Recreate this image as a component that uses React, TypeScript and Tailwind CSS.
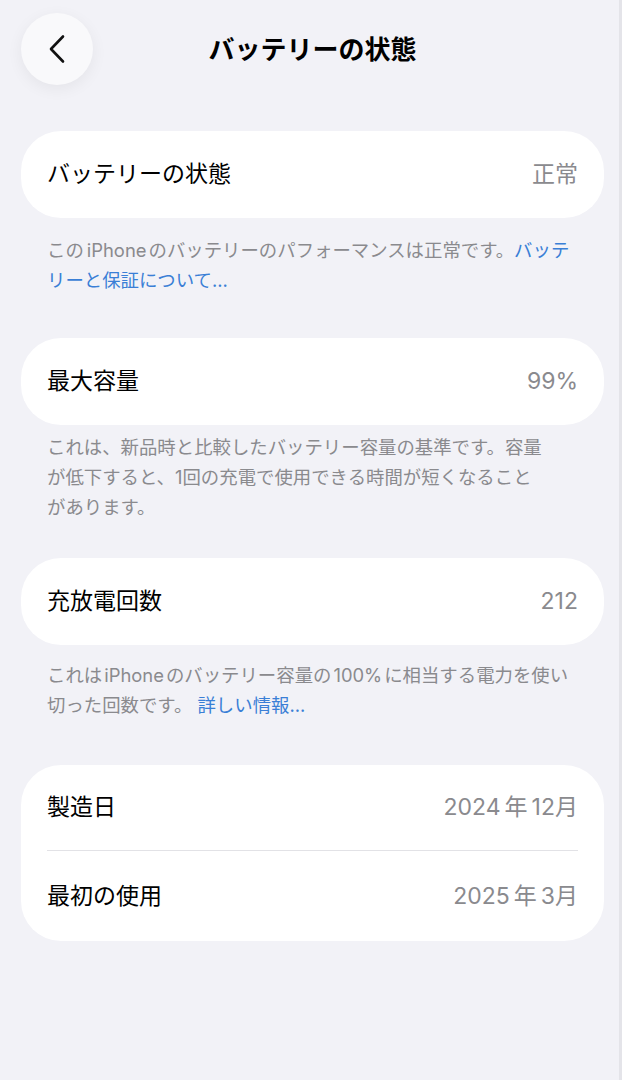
import React from "react";

const Card = ({ children, className = "" }: { children: React.ReactNode; className?: string }) => (
  <div className={`bg-white rounded-[40px] ${className}`}>{children}</div>
);

const Row = ({ label, value, className = "" }: { label: string; value: React.ReactNode; className?: string }) => (
  <div className={`flex items-center justify-between px-[26px] ${className}`}>
    <span className="text-[23px] text-black">{label}</span>
    <span className="text-[23px] text-[#8a8a8e]">{value}</span>
  </div>
);

const Footer = ({ children, className = "" }: { children: React.ReactNode; className?: string }) => (
  <p className={`px-[26px] text-[18.4px] leading-[30px] text-[#8a8a8e] whitespace-nowrap ${className}`}>{children}</p>
);

const Link = ({ children }: { children: React.ReactNode }) => (
  <span className="text-[#3a7fd6]">{children}</span>
);

const App = () => {
  return (
    <div className="min-h-screen bg-[#f2f2f7] border-r-[3px] border-[#e4e4e9] font-['Inter','Noto_Sans_CJK_JP',sans-serif]">
      <div className="pl-[21px] pr-[15px] pb-10">
        <header className="grid grid-cols-[72px_1fr_72px] items-center pt-[13px]">
          <button className="w-[72px] h-[72px] rounded-full bg-[#f9f9fb] shadow-[0_4px_16px_rgba(0,0,0,0.06)] flex items-center justify-center">
            <svg width="18" height="30" viewBox="0 0 18 30" fill="none">
              <path d="M15 2.5 L3 15 L15 27.5" stroke="#111" strokeWidth="2.6" strokeLinecap="round" strokeLinejoin="round" />
            </svg>
          </button>
          <h1 className="text-center text-[26px] font-bold text-black">バッテリーの状態</h1>
          <div />
        </header>

        <Card className="mt-[46px] h-[87px] flex items-center">
          <Row label="バッテリーの状態" value="正常" className="w-full" />
        </Card>
        <Footer className="pt-[17px]">
          この<span className="ml-[3px] mr-[2px]">iPhone</span>のバッテリーのパフォーマンスは正常です。<Link>バッテ</Link>
          <br />
          <Link>リーと保証について...</Link>
        </Footer>

        <Card className="mt-[43px] h-[87px] flex items-center">
          <Row label="最大容量" value="99%" className="w-full" />
        </Card>
        <Footer className="pt-[7px]">
          これは、新品時と比較したバッテリー容量の基準です。容量
          <br />
          が低下すると、1回の充電で使用できる時間が短くなること
          <br />
          があります。
        </Footer>

        <Card className="mt-[36px] h-[87px] flex items-center">
          <Row label="充放電回数" value="212" className="w-full" />
        </Card>
        <Footer className="pt-[15px]">
          これは<span className="ml-[2px] mr-[2px]">iPhone</span>のバッテリー容量の<span className="ml-[2px] mr-[2px]">100%</span>に相当する電力を使い
          <br />
          切った回数です。 <Link>詳しい情報...</Link>
        </Footer>

        <Card className="mt-[45px]">
          <Row
            label="製造日"
            value={
              <>
                2024<span className="mx-[4px]">年</span>12月
              </>
            }
            className="h-[85px]"
          />
          <div className="mx-[26px] h-px bg-[#e2e2e6]" />
          <Row
            label="最初の使用"
            value={
              <>
                2025<span className="mx-[4px]">年</span>3月
              </>
            }
            className="h-[90px]"
          />
        </Card>
      </div>
    </div>
  );
};

export default App;
